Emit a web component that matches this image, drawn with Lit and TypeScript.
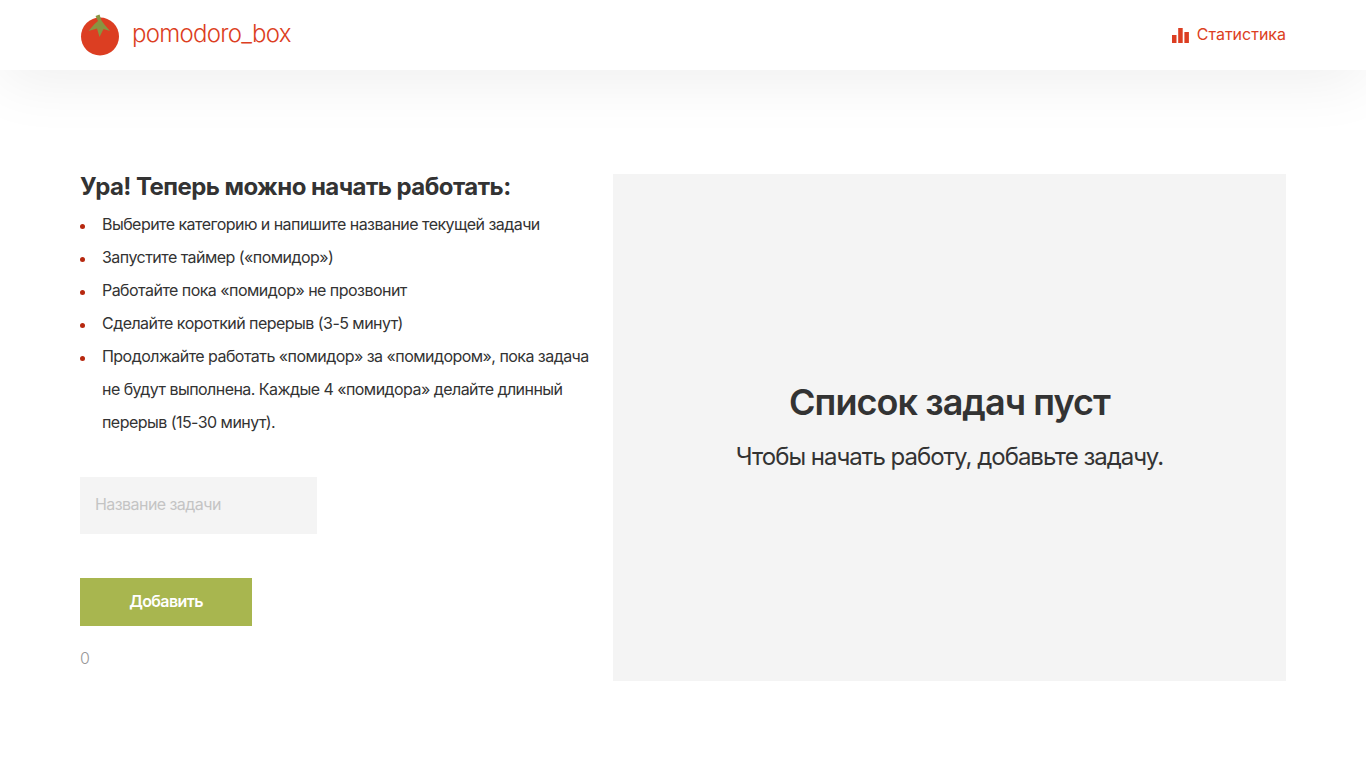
import { LitElement, html, css } from "lit";
import { customElement } from "lit/decorators.js";

@customElement("app-root")
export class AppRoot extends LitElement {
  static styles = css`
    :host { display: block; min-height: 768px; background: #fff; font-family: Inter, sans-serif; color: #333; }
    * { box-sizing: border-box; }
    .header { height: 70px; padding: 0 80px; display: flex; align-items: center; justify-content: space-between; background: #fff; box-shadow: 0 10px 63px rgba(0,0,0,.07); }
    .logo { display: flex; align-items: center; gap: 12px; color: #dc3e22; font-size: 24px; font-weight: 300; letter-spacing: -0.72px; }
    .logo span { position: relative; top: -2px; }
    .logo svg { display: block; }
    .stats { display: flex; align-items: center; gap: 8px; color: #dc3e22; font-size: 16px; font-weight: 400; }
    .stats span { position: relative; top: -1px; }
    .main { display: grid; grid-template-columns: 533px 673px; padding: 104px 80px 0; }
    .left { display: flex; flex-direction: column; align-items: flex-start; }
    h2 { margin: -1px 0 0; font-size: 24px; line-height: 28px; font-weight: 700; letter-spacing: -0.56px; color: #333; }
    ul { margin: 7px 0 0; padding: 0; list-style: none; width: 520px; }
    li { position: relative; padding-left: 22px; font-size: 16px; line-height: 33px; letter-spacing: -0.54px; color: #333; }
    li::before { content: ""; position: absolute; left: 0; top: 16px; width: 5px; height: 5px; border-radius: 50%; background: #b7280f; }
    .input { width: 237px; height: 57px; margin-top: 38px; padding: 0 0 3px 15px; display: flex; align-items: center; background: #f4f4f4; color: #c4c4c4; font-size: 16px; letter-spacing: -0.56px; font-weight: 400; }
    .btn { width: 172px; height: 48px; margin-top: 44px; padding-bottom: 2px; display: flex; align-items: center; justify-content: center; background: #a8b64f; color: #fff; font-size: 16px; font-weight: 600; letter-spacing: -0.6px; }
    .count { margin-top: 23px; color: #999; font-size: 16px; line-height: 19px; font-weight: 300; }
    .panel { height: 507px; background: #f4f4f4; display: flex; flex-direction: column; align-items: center; padding-top: 206px; }
    .panel h1 { margin: 0; font-size: 36px; line-height: 44px; font-weight: 600; letter-spacing: -0.95px; color: #333; }
    .panel p { margin: 18px 0 0; font-size: 24px; line-height: 30px; font-weight: 400; letter-spacing: -1px; color: #333; }
  `;

  render() {
    return html`
      <header class="header">
        <div class="logo">
          <svg width="40" height="42" viewBox="0 0 40 42">
            <circle cx="20" cy="22.500" r="19" fill="#dc3e22"/>
            <path d="M15.500 2L19.500 .5 21.500 6.500 24 10 30 17 23.500 15 19.500 23 17 14.500 8.500 17 14.500 10 18 7Z" fill="#899441"/>
          </svg>
          <span>pomodoro_box</span>
        </div>
        <div class="stats">
          <svg width="17" height="16" viewBox="0 0 17 16"><path d="M0 8h4.500v8H0zM6.200 1h4.500v15H6.200zM12.400 5h4.500v11h-4.500z" fill="#dc3e22"/></svg>
          <span>Статистика</span>
        </div>
      </header>
      <main class="main">
        <section class="left">
          <h2>Ура! Теперь можно начать работать:</h2>
          <ul>
            <li>Выберите категорию и напишите название текущей задачи</li>
            <li>Запустите таймер («помидор»)</li>
            <li>Работайте пока «помидор» не прозвонит</li>
            <li>Сделайте короткий перерыв (3-5 минут)</li>
            <li>Продолжайте работать «помидор» за «помидором», пока задача<br>не будут выполнена. Каждые 4 «помидора» делайте длинный<br>перерыв (15-30 минут).</li>
          </ul>
          <div class="input">Название задачи</div>
          <div class="btn">Добавить</div>
          <div class="count">0</div>
        </section>
        <section class="panel">
          <h1>Список задач пуст</h1>
          <p>Чтобы начать работу, добавьте задачу.</p>
        </section>
      </main>
    `;
  }
}
